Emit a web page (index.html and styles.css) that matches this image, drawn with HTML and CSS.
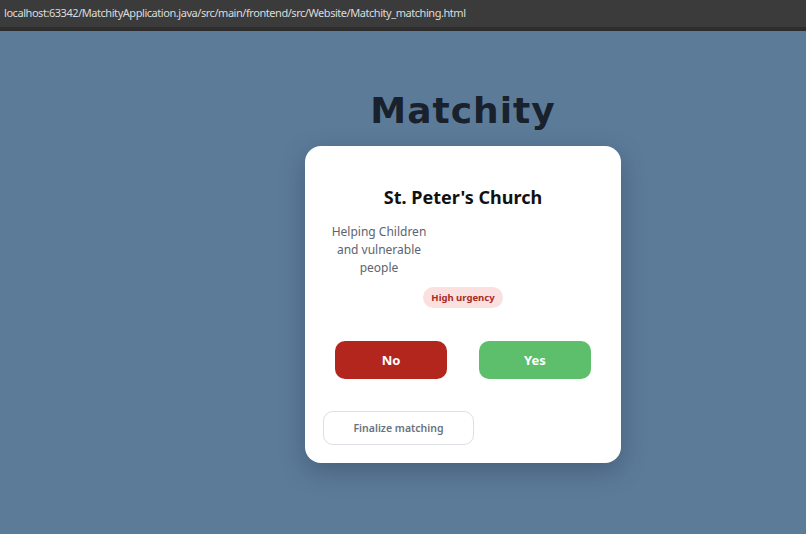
FILE: index.html
```html
<!DOCTYPE html>
<html lang="en">
<head>
    <meta charset="UTF-8">
    <meta name="viewport" content="width=device-width, initial-scale=1.0">
    <title>Matchity</title>
    <link rel="stylesheet" href="styles.css">
</head>
<body>
    <div class="address-bar">localhost:63342/MatchityApplication.java/src/main/frontend/src/Website/Matchity_matching.html</div>
    <div class="page">
        <h1 class="logo">Matchity</h1>
        <div class="card">
            <h2 class="org-name">St. Peter's Church</h2>
            <div class="info-row">
                <p class="description">Helping Children and vulnerable people</p>
            </div>
            <span class="badge">High urgency</span>
            <div class="choices">
                <button class="btn btn-no" type="button">No</button>
                <button class="btn btn-yes" type="button">Yes</button>
            </div>
            <button class="btn-finalize" type="button">Finalize matching</button>
        </div>
    </div>
</body>
</html>
```

FILE: styles.css
```css
body { margin: 0; background: #5c7b99; font-family: "Noto Sans", "Open Sans", sans-serif; height: 534px; overflow: hidden; }
.address-bar { height: 27px; line-height: 26px; padding-left: 4px; background: #3b3b3b; border-bottom: 4px solid #2d2d2d; color: #dcdcdc; font-size: 11px; letter-spacing: -0.45px; }
.page { display: flex; flex-direction: column; align-items: center; padding-left: 120px; }
.logo { margin: 58px 0 13px; font-family: "DejaVu Sans", Verdana, sans-serif; font-weight: bold; font-size: 36px; letter-spacing: 1px; color: #18212c; line-height: 44px; }
.card { width: 316px; height: 317px; box-sizing: border-box; background: #fff; border-radius: 16px; box-shadow: 0 8px 24px rgba(30, 45, 65, 0.35); padding: 38px 18px 0; display: flex; flex-direction: column; align-items: center; }
.org-name { margin: 0; font-size: 18px; font-weight: 700; color: #111; line-height: 26px; }
.info-row { align-self: stretch; display: flex; margin-top: 13px; }
.description { width: 106px; margin: 0 0 0 3px; text-align: center; font-size: 12px; line-height: 18px; color: #5d6370; }
.badge { margin-top: 10px; padding: 3px 8px; background: #fbe0e0; color: #a82a25; border-radius: 12px; font-size: 9.5px; font-weight: 700; line-height: 15px; }
.choices { align-self: stretch; display: flex; justify-content: space-between; padding: 0 12px; margin-top: 33px; }
.btn { width: 112px; height: 38px; border: none; border-radius: 10px; color: #fff; font-family: inherit; font-size: 13px; font-weight: 700; cursor: pointer; }
.btn-no { background: #b3261e; }
.btn-yes { background: #5dbf6b; }
.btn-finalize { align-self: flex-start; margin-top: 32px; width: 151px; height: 34px; background: #fff; border: 1px solid #dcdfe4; border-radius: 10px; color: #6b7280; font-family: inherit; font-size: 10.5px; font-weight: 600; cursor: pointer; }
```
